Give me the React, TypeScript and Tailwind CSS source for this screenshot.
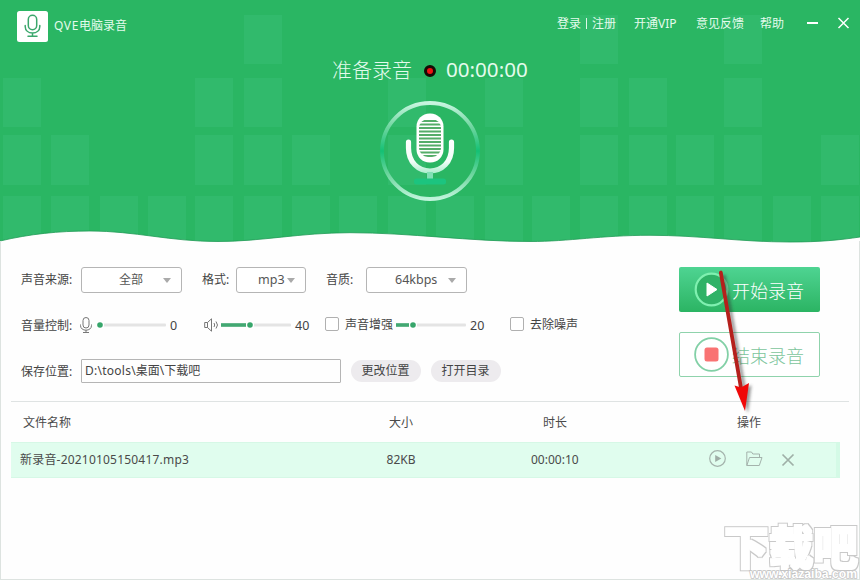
import type { ReactNode } from 'react';

const TILE_ROWS: { y: number; h: number; xs: number[] }[] = [
  { y: 15, h: 49, xs: [244, 580, 724] },
  { y: 78, h: 49, xs: [3, 195, 244, 388, 485, 580, 629, 724] },
  { y: 135, h: 50, xs: [3, 51, 195, 244, 292, 388, 485, 580, 629, 676, 724, 821] },
  {
    y: 196,
    h: 50,
    xs: [3, 51, 100, 148, 195, 244, 292, 339, 388, 436, 485, 532, 580, 629, 676, 724, 773, 821],
  },
];

const WAVE =
  'M0 241 C30 234 58 231 90 231 C135 231 170 241.5 218 241.5 C262 241.5 300 232.7 350 232.7 C410 232.7 470 241.5 530 241.5 C570 241.5 600 235.3 650 235.3 C700 235.3 740 242 790 242 C820 242 840 240 860 237';

function Backdrop() {
  return (
    <svg className="absolute inset-0" width="860" height="250" viewBox="0 0 860 250">
      <rect width="860" height="250" fill="#2ab663" />
      {TILE_ROWS.map((row) =>
        row.xs.map((x) => (
          <rect key={`${row.y}-${x}`} x={x} y={row.y} width="38" height={row.h} fill="#31ba6c" />
        )),
      )}
      <path d={`${WAVE} V250 H0 Z`} fill="#fefefe" />
      <path d={WAVE} fill="none" stroke="#1f9a55" strokeWidth="0.8" />
    </svg>
  );
}

function MicBadge() {
  return (
    <svg width="100" height="100" viewBox="0 0 100 100">
      <defs>
        <linearGradient id="ring" x1="0" y1="0" x2="0" y2="1">
          <stop offset="0" stopColor="#c8f5e0" />
          <stop offset="0.25" stopColor="#6fd6a0" />
          <stop offset="0.5" stopColor="#14c074" />
          <stop offset="0.75" stopColor="#6fd6a0" />
          <stop offset="1" stopColor="#c0f4dc" />
        </linearGradient>
        <linearGradient id="cup" gradientUnits="userSpaceOnUse" x1="0" y1="38" x2="0" y2="83">
          <stop offset="0" stopColor="#fff" />
          <stop offset="0.5" stopColor="#f2fdf8" />
          <stop offset="0.78" stopColor="#a5ecca" />
          <stop offset="1" stopColor="#10c176" />
        </linearGradient>
        <clipPath id="grille">
          <rect x="39" y="18" width="22" height="38" rx="9" />
        </clipPath>
      </defs>
      <circle cx="50" cy="50" r="48" fill="none" stroke="url(#ring)" strokeWidth="3.8" />
      <rect x="36.5" y="12.5" width="27" height="49" rx="13" fill="#fff" />
      <g clipPath="url(#grille)" fill="#55ad69">
        {[19, 22.5, 26, 29.5, 33, 36.5, 40, 43.5, 47, 50.5, 54].map((y) => (
          <rect key={y} x="38" y={y} width="24" height="2" />
        ))}
      </g>
      <path
        d="M28.5 41 V47 C28.5 61 38 70 50 70 S71.5 61 71.5 47 V41"
        fill="none"
        stroke="url(#cup)"
        strokeWidth="5.2"
        strokeLinecap="round"
      />
      <rect x="47" y="71" width="6" height="8" fill="#7fe0b5" />
      <rect x="34" y="77.5" width="32" height="6" rx="2.5" fill="#1cc47f" />
    </svg>
  );
}

function Select({ className, label, labelClass, arrowClass }: { className: string; label: string; labelClass: string; arrowClass: string }) {
  return (
    <div className={`flex h-[26px] shrink-0 items-center rounded-[3px] border border-[#b5b5b5] bg-white text-[#555] ${className}`}>
      <span className={`shrink-0 ${labelClass}`}>{label}</span>
      <svg className={`shrink-0 ${arrowClass}`} width="8" height="5" viewBox="0 0 8 5">
        <path d="M0 0 H8 L4 5 Z" fill="#aaa" />
      </svg>
    </div>
  );
}

function Slider({ value, className }: { value: number; className: string }) {
  return (
    <svg className={`shrink-0 ${className}`} width="70" height="8" viewBox="0 0 70 8">
      <rect x="0" y="2.5" width="70" height="3" rx="1" fill="#e4e4e4" />
      <rect x="0" y="2.2" width={Math.max(0, value - 4)} height="3.6" fill="#42a872" />
      <circle cx={value} cy="4" r="4" fill="#fff" />
      <circle cx={value} cy="4" r="2.8" fill="#36a56a" />
    </svg>
  );
}

function Check({ className }: { className: string }) {
  return <span className={`h-[14px] w-[14px] shrink-0 rounded-[2px] border border-[#b0b0b0] bg-white ${className}`} />;
}

function Pill({ children, className }: { children: ReactNode; className: string }) {
  return (
    <button className={`flex h-[22px] w-[70px] shrink-0 items-center justify-center rounded-full bg-[#edebee] pr-[1px] ${className}`}>
      {children}
    </button>
  );
}

function TitleBar() {
  return (
    <div className="flex h-[53px] items-center text-[#e4fbed]">
      <svg className="ml-[17px] shrink-0" width="31" height="31" viewBox="0 0 31 31">
        <rect width="31" height="31" rx="2.5" fill="#fff" />
        <g fill="none" stroke="#3aa76c" strokeWidth="1.5" strokeLinecap="round">
          <rect x="11.3" y="4.3" width="8.4" height="14.4" rx="4.2" />
          <path d="M8.2 14.5 V15.5 C8.2 19.6 11.4 22 15.5 22 S22.8 19.6 22.8 15.5 V14.5 M15.5 22 V25 M11 25.2 H20" />
        </g>
      </svg>
      <span className="mb-[2px] ml-[6px] w-[503px] shrink-0">
        <span className="tracking-[0.6px]">QVE</span>电脑录音
      </span>
      <nav className="flex h-[53px] items-start pt-[15px]">
        <span className="w-[24px]">登录</span>
        <span className="mt-[3px] ml-[5px] h-[11px] w-px bg-[#dff8e9]" />
        <span className="ml-[5px] w-[42px]">注册</span>
        <span className="w-[62px]">开通VIP</span>
        <span className="w-[64px]">意见反馈</span>
        <span className="w-[47px]">帮助</span>
        <svg className="mt-[2px]" width="43" height="12" viewBox="0 0 43 12">
          <path d="M0 6 H11" stroke="#fff" strokeWidth="2" />
          <path d="M31.5 1 L41.5 11 M41.5 1 L31.5 11" stroke="#fff" strokeWidth="1.5" />
        </svg>
      </nav>
    </div>
  );
}

function Header() {
  return (
    <header className="relative h-[250px] shrink-0">
      <Backdrop />
      <div className="relative flex flex-col">
        <TitleBar />
        <div className="flex h-[36px] items-center pl-[332px] text-[20px] text-[#e4fbed]">
          <span className="w-[92px] font-light">准备录音</span>
          <span className="h-[12px] w-[12px] rounded-full border-[3px] border-[#170a05] bg-[#ed1313]" />
          <span className="mb-[4px] ml-[10px] text-[20.6px]">00:00:00</span>
        </div>
        <div className="mt-[12px] flex pl-[380px]">
          <MicBadge />
        </div>
      </div>
    </header>
  );
}

function Controls() {
  return (
    <section className="flex h-[151px] shrink-0 text-[#444]">
      <div className="flex w-[679px] flex-col pt-[17px] pl-[21px]">
        <div className="flex h-[26px] items-center">
          <span className="w-[60px] shrink-0">声音来源:</span>
          <Select className="w-[101px]" label="全部" labelClass="ml-[37px] w-[24px]" arrowClass="ml-[20px]" />
          <span className="ml-[20px] w-[34px] shrink-0">格式:</span>
          <Select className="w-[70px]" label="mp3" labelClass="ml-[21px] w-[26px] text-[12.5px]" arrowClass="ml-[3px]" />
          <span className="ml-[20px] w-[40px] shrink-0">音质:</span>
          <Select className="w-[101px]" label="64kbps" labelClass="ml-[28px] w-[44px] text-[12.5px]" arrowClass="ml-[9px]" />
        </div>
        <div className="mt-[19px] flex h-[26px] items-center">
          <span className="mt-[2px] w-[59px] shrink-0">音量控制:</span>
          <svg className="shrink-0" width="12" height="16" viewBox="0 0 12 16" fill="none" stroke="#777">
            <rect x="3" y="0.5" width="6" height="10.5" rx="3" />
            <path d="M0.5 7.5 V8.5 C0.5 11.5 3 13.2 6 13.2 S11.5 11.5 11.5 8.5 V7.5 M6 13.2 V15.5 M3 15.5 H9" />
          </svg>
          <Slider value={4} className="ml-[4px]" />
          <span className="mt-[2px] ml-[4px] w-[34px] shrink-0 text-[12.5px]">0</span>
          <svg className="shrink-0" width="15" height="14" viewBox="0 0 15 14" fill="none" stroke="#777">
            <path d="M0.7 4.5 H3.5 L7.5 0.8 V13.2 L3.5 9.5 H0.7 Z M3.5 4.5 V9.5" />
            <path d="M10 5 Q11.4 7 10 9 M12 3.5 Q15 7 12 10.5" />
          </svg>
          <Slider value={29} className="ml-[2px]" />
          <span className="mt-[2px] ml-[4px] w-[30px] shrink-0 text-[12.5px]">40</span>
          <Check className="mb-[2px]" />
          <span className="ml-[6px] w-[51px] shrink-0">声音增强</span>
          <Slider value={17} className="" />
          <span className="mt-[2px] ml-[4px] w-[40px] shrink-0 text-[12.5px]">20</span>
          <Check className="mb-[2px]" />
          <span className="ml-[6px] shrink-0">去除噪声</span>
        </div>
        <div className="mt-[20px] flex h-[26px] items-center">
          <span className="mt-[2px] w-[60px] shrink-0">保存位置:</span>
          <div className="flex h-[24px] w-[260px] shrink-0 items-center rounded-[1px] border border-[#b5b5b5] pl-[3px]">
            <span className="tracking-[0.25px]">D:\tools\</span>桌面\下载吧
          </div>
          <Pill className="ml-[10px]">更改位置</Pill>
          <Pill className="ml-[10px]">打开目录</Pill>
        </div>
      </div>
      <div className="flex w-[141px] flex-col gap-[20px] pt-[17px]">
        <button className="flex h-[45px] items-center rounded-[2px] bg-linear-to-b from-[#4ed492] to-[#2bb463] pl-[15px] text-[18px] font-light text-white">
          <svg className="shrink-0" width="35" height="35" viewBox="0 0 35 35">
            <circle cx="17.5" cy="17.5" r="15.8" fill="#2fb267" stroke="#7ff0b0" strokeWidth="2.2" />
            <path d="M13 11 L23 17.5 L13 24 Z" fill="#fff" stroke="#fff" strokeWidth="1" strokeLinejoin="round" />
          </svg>
          <span className="mt-[2px] ml-[3px]">开始录音</span>
        </button>
        <button className="flex h-[45px] items-center rounded-[2px] border border-[#8fd3ac] bg-white pl-[14px] text-[18px] font-light text-[#7cc59c]">
          <svg className="shrink-0" width="35" height="35" viewBox="0 0 35 35">
            <circle cx="17.5" cy="17.5" r="16.4" fill="#fff" stroke="#82d0a6" strokeWidth="1.8" />
            <rect x="10.5" y="10.5" width="14" height="14" rx="2.5" fill="#f97373" />
          </svg>
          <span className="mt-[2px] ml-[3px]">结束录音</span>
        </button>
      </div>
    </section>
  );
}

function FileTable() {
  return (
    <section className="flex flex-col pl-[11px] text-[#4a4a4a]">
      <div className="h-px w-[838px] bg-[#dfe3e3]" />
      <div className="flex h-[40px] items-center pt-px">
        <span className="w-[366px] pl-[12px]">文件名称</span>
        <span className="w-[48px] text-center">大小</span>
        <span className="w-[260px] pl-[118px]">时长</span>
        <span className="pl-[52px]">操作</span>
      </div>
      <div className="flex h-[36px] w-[829px] items-center border-y border-r-4 border-y-[#d6f8e6] border-r-[#d4fae6] bg-[#e0fdee]">
        <span className="w-[366px] pl-[9px] tracking-[0.2px]">新录音-20210105150417.mp3</span>
        <span className="w-[48px] text-center">82KB</span>
        <span className="w-[273px] pl-[106px]">00:00:10</span>
        <svg className="mb-[3px] ml-[11px] shrink-0" width="17" height="17" viewBox="0 0 17 17">
          <circle cx="8.5" cy="8.5" r="7.8" fill="none" stroke="#a4b3ac" strokeWidth="1.2" />
          <path d="M6.2 5 L12.3 8.5 L6.2 12 Z" fill="#9fada6" />
        </svg>
        <svg className="mb-[3px] ml-[20px] shrink-0" width="17" height="16" viewBox="0 0 17 16" fill="none" stroke="#a4b3ac">
          <path d="M0.8 14.5 V1 H5.5 L6.8 3 H13.5 V6" />
          <path d="M0.8 14.5 L3.5 6.5 H16 L13.3 14.5 Z" />
        </svg>
        <svg className="ml-[18px] shrink-0" width="14" height="14" viewBox="0 0 14 14">
          <path d="M1.5 1.5 L12.5 12.5 M12.5 1.5 L1.5 12.5" stroke="#9fb0a7" strokeWidth="1.7" />
        </svg>
      </div>
    </section>
  );
}

function Pointer() {
  return (
    <svg className="pointer-events-none absolute top-[265px] left-[712px]" width="48" height="152" viewBox="712 265 48 152">
      <defs>
        <filter id="soft" x="-40%" y="-10%" width="180%" height="120%">
          <feGaussianBlur stdDeviation="1.6" />
        </filter>
      </defs>
      <g transform="translate(3 2)" opacity="0.5" filter="url(#soft)">
        <path d="M721 273 L741 386" stroke="#333" strokeWidth="3.5" />
        <path d="M734.5 385 L741 387 L748.5 383 L745 411 Z" fill="#333" />
      </g>
      <path d="M720.8 272.5 L741 388" stroke="#b5201c" strokeWidth="3.8" strokeLinecap="round" />
      <path d="M734.5 385.5 L741 387.5 L749 383 L745 411 Z" fill="#f00808" />
    </svg>
  );
}

function Watermark() {
  return (
    <div className="pointer-events-none absolute top-[500px] left-[722px] h-[80px] w-[138px]">
      <svg width="138" height="80" viewBox="0 0 138 80">
        <defs>
          <filter id="outline" x="-5%" y="-5%" width="110%" height="110%">
            <feMorphology in="SourceAlpha" operator="dilate" radius="1.5" result="outer" />
            <feFlood floodColor="#c9c9c9" />
            <feComposite in2="outer" operator="in" result="edge" />
            <feMorphology in="SourceGraphic" operator="dilate" radius="0.6" result="inner" />
            <feMerge>
              <feMergeNode in="edge" />
              <feMergeNode in="inner" />
            </feMerge>
          </filter>
        </defs>
        <text x="2" y="64" fontSize="46" fontWeight="900" textLength="134" lengthAdjust="spacingAndGlyphs" fill="#fff" filter="url(#outline)" className="font-['Noto_Sans_CJK_SC',sans-serif]">
          下载吧
        </text>
        <text x="28" y="78" fontSize="12" fontWeight="700" textLength="107" lengthAdjust="spacingAndGlyphs" fill="#fff" stroke="#c4c4c4" strokeWidth="1.6" className="font-['Liberation_Sans',sans-serif] [paint-order:stroke]">
          www.xiazaiba.com
        </text>
      </svg>
    </div>
  );
}

export default function App() {
  return (
    <div className="relative flex h-[580px] w-[860px] flex-col overflow-hidden bg-[#fefefe] font-['Noto_Sans','Noto_Sans_CJK_SC',sans-serif] text-[12px] leading-[18px] whitespace-nowrap">
      <Header />
      <Controls />
      <FileTable />
      <div className="pointer-events-none absolute inset-x-0 top-[241px] bottom-0 border border-t-0 border-[#dde3e0]" />
      <Watermark />
      <Pointer />
    </div>
  );
}
